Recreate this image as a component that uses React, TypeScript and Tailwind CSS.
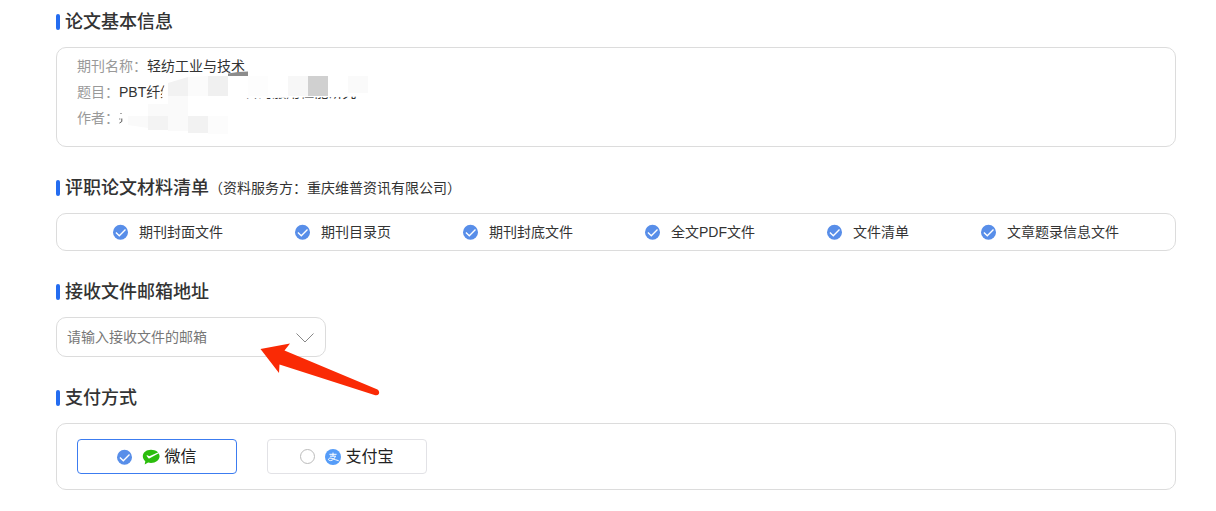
import React, { useState } from 'react';

type PayMethod = 'wechat' | 'alipay';

const MATERIALS = ['期刊封面文件', '期刊目录页', '期刊封底文件', '全文PDF文件', '文件清单', '文章题录信息文件'];

const CheckCircle: React.FC = () => (
  <svg className="size-4 shrink-0" viewBox="0 0 16 16" aria-hidden="true">
    <circle cx="7.5" cy="8.3" r="7.5" fill="#588ee9" />
    <path d="M2.900 8.500 L6.300 11.700 L12.500 5.600" fill="none" stroke="#fff" strokeWidth="1.400" />
  </svg>
);

const WechatIcon: React.FC = () => (
  <svg className="h-4 w-[18px] shrink-0" viewBox="0 0 18 16" aria-hidden="true">
    <path
      d="M9 .8C4.200.800.800 3.700.800 7.300c0 2.100 1.100 3.800 2.500 5L2.700 15.600l3.400-2c.9.200 1.900.400 2.900.400 4.800 0 8.600-3 8.600-6.700S13.800.8 9 .8z"
      fill="#2bbd0c"
    />
    <path d="M4.900 6.200c.7-.2 1.100.3 1.900.9.400.2.700.2 1.100 0L17 2.900 17.200 4 7.700 9.200c-.8.400-1.400.2-1.700-.5L4.700 6.900c-.1-.3-.1-.6.200-.7z" fill="#fff" />
  </svg>
);

const AlipayIcon: React.FC = () => (
  <svg className="size-4 shrink-0" viewBox="0 0 16 16" aria-hidden="true">
    <circle cx="8" cy="8" r="8" fill="#559cf8" />
    <g fill="none" stroke="#fff" strokeWidth="1">
      <path d="M4.400 5.300h7.200M8 3.600v3.500M5 7.200h5.800" />
      <path d="M10.400 7.200c-.8 2.200-2.600 4.300-4.900 4.400-1.700 0-2.400-.9-1.900-1.700.5-.9 2-1 3.500-.5 2.200.8 4 1.800 6.600 2.300" />
    </g>
  </svg>
);

const SectionTitle: React.FC<{ children: React.ReactNode }> = ({ children }) => (
  <div className="mb-[11px] flex h-7 items-center">
    <span className="mr-[5px] h-4 w-1 rounded-xs bg-[#246cf0]" />
    {children}
  </div>
);

const titleClass = 'text-lg leading-7 font-medium text-[#333]';

const PayOption: React.FC<{
  value: PayMethod;
  label: string;
  icon: React.ReactNode;
  checked: boolean;
  onSelect: (value: PayMethod) => void;
}> = ({ value, label, icon, checked, onSelect }) => (
  <label
    className={`flex h-[35px] w-40 cursor-pointer items-center justify-center rounded-sm border text-base text-[#222] ${
      checked ? 'border-[#3c7cf0]' : 'border-[#e2e2e6]'
    }`}
  >
    <span className="mr-[9px] grid size-4 shrink-0 items-center">
      <input
        type="radio"
        name="pay"
        value={value}
        checked={checked}
        onChange={() => onSelect(value)}
        className="col-start-1 row-start-1 size-[15px] appearance-none rounded-full border border-[#bbb] checked:border-transparent"
      />
      {checked && (
        <span className="pointer-events-none col-start-1 row-start-1">
          <CheckCircle />
        </span>
      )}
    </span>
    {icon}
    <span className="ml-1">{label}</span>
  </label>
);

// Mosaic that hides the private part of the paper info
const Mosaic: React.FC = () => (
  <svg className="pointer-events-none absolute top-[21px] left-[57px] h-[67px] w-[256px]" viewBox="114 69 256 67" aria-hidden="true">
    <path d="M166 84 L188 77 L228 74.500 L248 76 H370 V96.500 L240 98.500 V136 H123.500 L122 124 H117 V119.500 H121 V117 H117 V108 H123 L163 100 Q160 92 166 84z" fill="#fff" />
    <path d="M228 73.500 L238 72 L248 71.500 V76 H228z" fill="#8c8c8c" />
    <path d="M168 83 L188 77 V96 H168z" fill="#f2f2f2" />
    <path d="M188 77 L208 76 V96 H188z" fill="#fbfbfb" />
    <rect x="208" y="76" width="20" height="20" fill="#f0f0f0" />
    <rect x="248" y="76" width="20" height="20" fill="#fdfdfd" />
    <rect x="288" y="76" width="20" height="20" fill="#f7f7f7" />
    <rect x="308" y="76" width="20" height="20" fill="#d0d0d0" />
    <rect x="348" y="76" width="20" height="17" fill="#fafafa" />
    <path d="M148 104h20v-8h20v20h-40z" fill="#fafafa" />
    <path d="M128 116h20v12l-20-3z" fill="#fafafa" />
    <rect x="148" y="116" width="20" height="14" fill="#f3f3f3" />
    <rect x="168" y="116" width="20" height="15" fill="#fafafa" />
    <rect x="188" y="116" width="20" height="17" fill="#f2f2f2" />
    <rect x="208" y="116" width="20" height="18" fill="#fcfcfc" />
    <path d="M120.500 114l1-1M121.800 118.500v3l-2.300 1.500M119.800 118.500v1" fill="none" stroke="#555" strokeWidth="1" />
  </svg>
);

const Arrow: React.FC = () => (
  <svg className="pointer-events-none absolute top-6 left-[203px] h-[54px] w-[120px]" viewBox="260 342 120 54" aria-hidden="true">
    <path d="M260.500 349 L290 343.500 L284.500 350.500 L377.500 389.500 Q380 391.500 378.800 394 Q377.500 395.800 374.500 395 L279.500 364.500 L279 373z" fill="#fa2a05" />
  </svg>
);

export default function App() {
  const [pay, setPay] = useState<PayMethod>('wechat');
  const [email, setEmail] = useState('');

  return (
    <main className="flex flex-col gap-[27px] bg-white pt-2 pr-10 pb-5 pl-14 font-['Liberation_Sans','Noto_Sans_CJK_SC',sans-serif] text-sm text-[#333]">
      <section>
        <SectionTitle>
          <h2 className={titleClass}>论文基本信息</h2>
        </SectionTitle>
        <div className="relative rounded-[10px] border border-[#dcdcdc] px-5 pt-[5px] pb-[15px] leading-[26px]">
          <dl>
            <div className="flex">
              <dt className="text-[#999]">期刊名称：</dt>
              <dd>轻纺工业与技术</dd>
            </div>
            <div className="flex">
              <dt className="text-[#999]">题目：</dt>
              <dd className="flex gap-[70px]">
                <span>PBT纤维</span>
                <span>料的服用性能研究</span>
              </dd>
            </div>
            <div className="flex">
              <dt className="text-[#999]">作者：</dt>
              <dd />
            </div>
          </dl>
          <Mosaic />
        </div>
      </section>

      <section>
        <SectionTitle>
          <h2 className={titleClass}>评职论文材料清单</h2>
          <span>（资料服务方：重庆维普资讯有限公司）</span>
        </SectionTitle>
        <ul className="flex justify-around rounded-[10px] border border-[#dcdcdc] px-5 py-2">
          {MATERIALS.map(name => (
            <li key={name} className="flex items-center gap-2.5 whitespace-nowrap">
              <CheckCircle />
              {name}
            </li>
          ))}
        </ul>
      </section>

      <section>
        <SectionTitle>
          <h2 className={titleClass}>
            <label htmlFor="email">接收文件邮箱地址</label>
          </h2>
        </SectionTitle>
        <div className="relative flex h-10 w-[270px] items-center rounded-[10px] border border-[#dcdcdc] px-2.5">
          <input
            id="email"
            type="email"
            value={email}
            onChange={e => setEmail(e.target.value)}
            placeholder="请输入接收文件的邮箱"
            className="min-w-0 flex-1 outline-none placeholder:text-[#777]"
          />
          <button type="button" aria-label="展开" className="shrink-0 cursor-pointer">
            <svg className="h-3 w-5" viewBox="0 0 20 12" fill="none" stroke="#888" aria-hidden="true">
              <path d="M1.500 2.500 L10 11 L18.500 2.500" />
            </svg>
          </button>
          <Arrow />
        </div>
      </section>

      <section>
        <SectionTitle>
          <h2 className={titleClass}>支付方式</h2>
        </SectionTitle>
        <div className="flex gap-[30px] rounded-[10px] border border-[#dcdcdc] px-5 py-[15px]">
          <PayOption value="wechat" label="微信" icon={<WechatIcon />} checked={pay === 'wechat'} onSelect={setPay} />
          <PayOption value="alipay" label="支付宝" icon={<AlipayIcon />} checked={pay === 'alipay'} onSelect={setPay} />
        </div>
      </section>
    </main>
  );
}
